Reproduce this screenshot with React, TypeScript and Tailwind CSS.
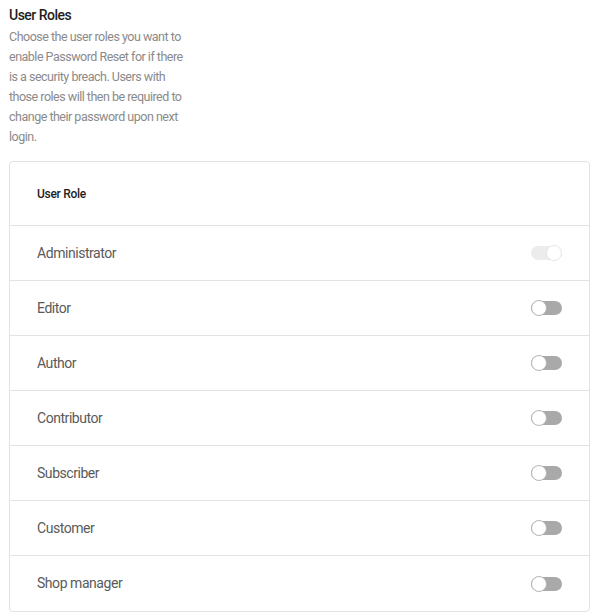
import React from "react";

const roles = ["Administrator", "Editor", "Author", "Contributor", "Subscriber", "Customer", "Shop manager"];

function Toggle({ on }: { on: boolean }) {
  if (on) {
    return (
      <div className="relative w-[31px] h-[14px] rounded-full bg-[#ececec]">
        <div className="absolute right-0 top-[-1px] w-[16px] h-[16px] rounded-full bg-white border border-[#e6e6e6]" />
      </div>
    );
  }
  return (
    <div className="relative w-[31px] h-[14px] rounded-full bg-[#a9a9a9]">
      <div className="absolute left-0 top-[-1px] w-[16px] h-[16px] rounded-full bg-white border border-[#b5b5b5]" />
    </div>
  );
}

export default function App() {
  return (
    <div className="w-[600px] h-[616px] bg-white" style={{ fontFamily: "Roboto, 'Liberation Sans', sans-serif" }}>
      <div className="pl-[9px] pr-[10px] pt-[5px]">
        <h2 className="text-[14px] leading-[20px] font-medium text-[#1e1e1e] tracking-[-0.5px]">User Roles</h2>
        <p className="mt-[2px] w-[182px] text-[12.5px] leading-[20px] text-[#8a8a8a] tracking-[-0.5px]">
          Choose the user roles you want to enable Password Reset for if there is a security breach. Users with those roles will then be required to change their password upon next login.
        </p>
        <div className="mt-[14px] border border-[#e2e2e2] rounded-[4px]">
          <div className="h-[64px] flex items-center pl-[27px] border-b border-[#e2e2e2]">
            <span className="text-[12px] font-medium text-[#1e1e1e] tracking-[-0.3px]">User Role</span>
          </div>
          {roles.map((r, i) => (
            <div
              key={r}
              className={
                "h-[55px] flex items-center justify-between pl-[27px] pr-[27px] " +
                (i < roles.length - 1 ? "border-b border-[#e2e2e2]" : "")
              }
            >
              <span className="text-[14px] text-[#5a5a5a] tracking-[-0.45px]">{r}</span>
              <Toggle on={i === 0} />
            </div>
          ))}
        </div>
      </div>
    </div>
  );
}
